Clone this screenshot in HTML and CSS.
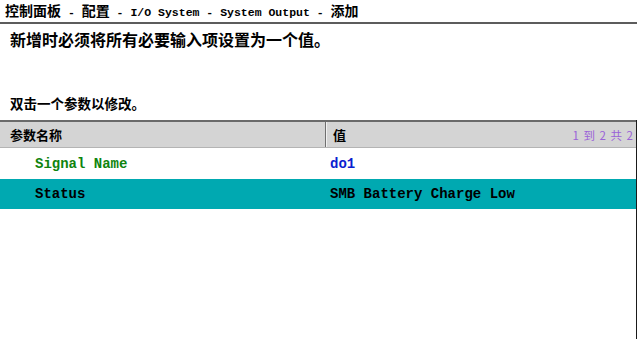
FILE: index.html
```html
<!DOCTYPE html>
<html lang="zh-CN">
<head>
<meta charset="utf-8">
<title>System Output - 添加</title>
<link rel="stylesheet" href="styles.css">
</head>
<body>
<div class="page">
  <div class="title"><span class="cj">控制面板</span> - <span class="cj">配置</span> - I/O System - System Output - <span class="cj">添加</span></div>
  <div class="notice">新增时必须将所有必要输入项设置为一个值。</div>
  <div class="hint">双击一个参数以修改。</div>
  <div class="table">
    <div class="thead">
      <div class="th th-name">参数名称</div>
      <div class="th th-value"><span>值</span><span class="count">1 到 2 共 2</span></div>
    </div>
    <div class="row">
      <div class="cell cell-name green">Signal Name</div>
      <div class="cell cell-value blue">do1</div>
    </div>
    <div class="row selected">
      <div class="cell cell-name">Status</div>
      <div class="cell cell-value">SMB Battery Charge Low</div>
    </div>
  </div>
</div>
</body>
</html>
```

FILE: styles.css
```css
html, body {
  margin: 0;
  padding: 0;
  background: #ffffff;
}
.page {
  width: 638px;
  height: 339px;
  display: flex;
  flex-direction: column;
  overflow: hidden;
  font-family: "Liberation Mono", "Noto Sans CJK SC", monospace;
  color: #000;
}
.title {
  height: 22px;
  line-height: 20px;
  padding-left: 5px;
  font-size: 11.5px;
  font-weight: bold;
  border-bottom: 2px solid #5c5c5c;
  margin-right: 1px;
  white-space: nowrap;
}
.title .cj {
  font-family: "Noto Sans CJK SC", sans-serif;
  font-size: 14px;
  font-weight: bold;
}
.notice {
  padding: 5px 10px 11px;
  line-height: 20px;
  font-family: "Noto Sans CJK SC", sans-serif;
  font-size: 16px;
  font-weight: bold;
}
.hint {
  margin-top: 35px;
  padding-left: 10px;
  line-height: 16px;
  font-family: "Noto Sans CJK SC", sans-serif;
  font-size: 13.5px;
  font-weight: bold;
}
.table {
  margin-top: 9px;
  flex: 1;
  width: 636px;
  border-right: 1px solid #1a1a1a;
}
.thead {
  display: flex;
  height: 25px;
  background: #d4d4d4;
  border-top: 2px solid #6a6a6a;
  border-bottom: 1px solid #b4b4b4;
}
.th {
  display: flex;
  align-items: center;
  font-family: "Noto Sans CJK SC", sans-serif;
  font-size: 13px;
  font-weight: bold;
}
.th-name {
  width: 315px;
  padding-left: 10px;
  border-right: 1px solid #6f6f6f;
}
.th-value {
  flex: 1;
  justify-content: space-between;
  padding-left: 6px;
  padding-right: 2px;
  border-left: 1px solid #f0f0f0;
}
.count {
  font-size: 11.5px;
  font-weight: normal;
  color: #9a62d8;
  letter-spacing: 1px;
}
.row {
  display: flex;
  height: 31px;
  align-items: center;
  font-size: 14px;
  font-weight: bold;
}
.row.selected {
  height: 30px;
  background: #00a9b1;
}
.cell-name {
  width: 295px;
  padding-left: 35px;
}
.cell-value {
  flex: 1;
}
.green { color: #0e840e; }
.blue { color: #0a1fd0; }
```
